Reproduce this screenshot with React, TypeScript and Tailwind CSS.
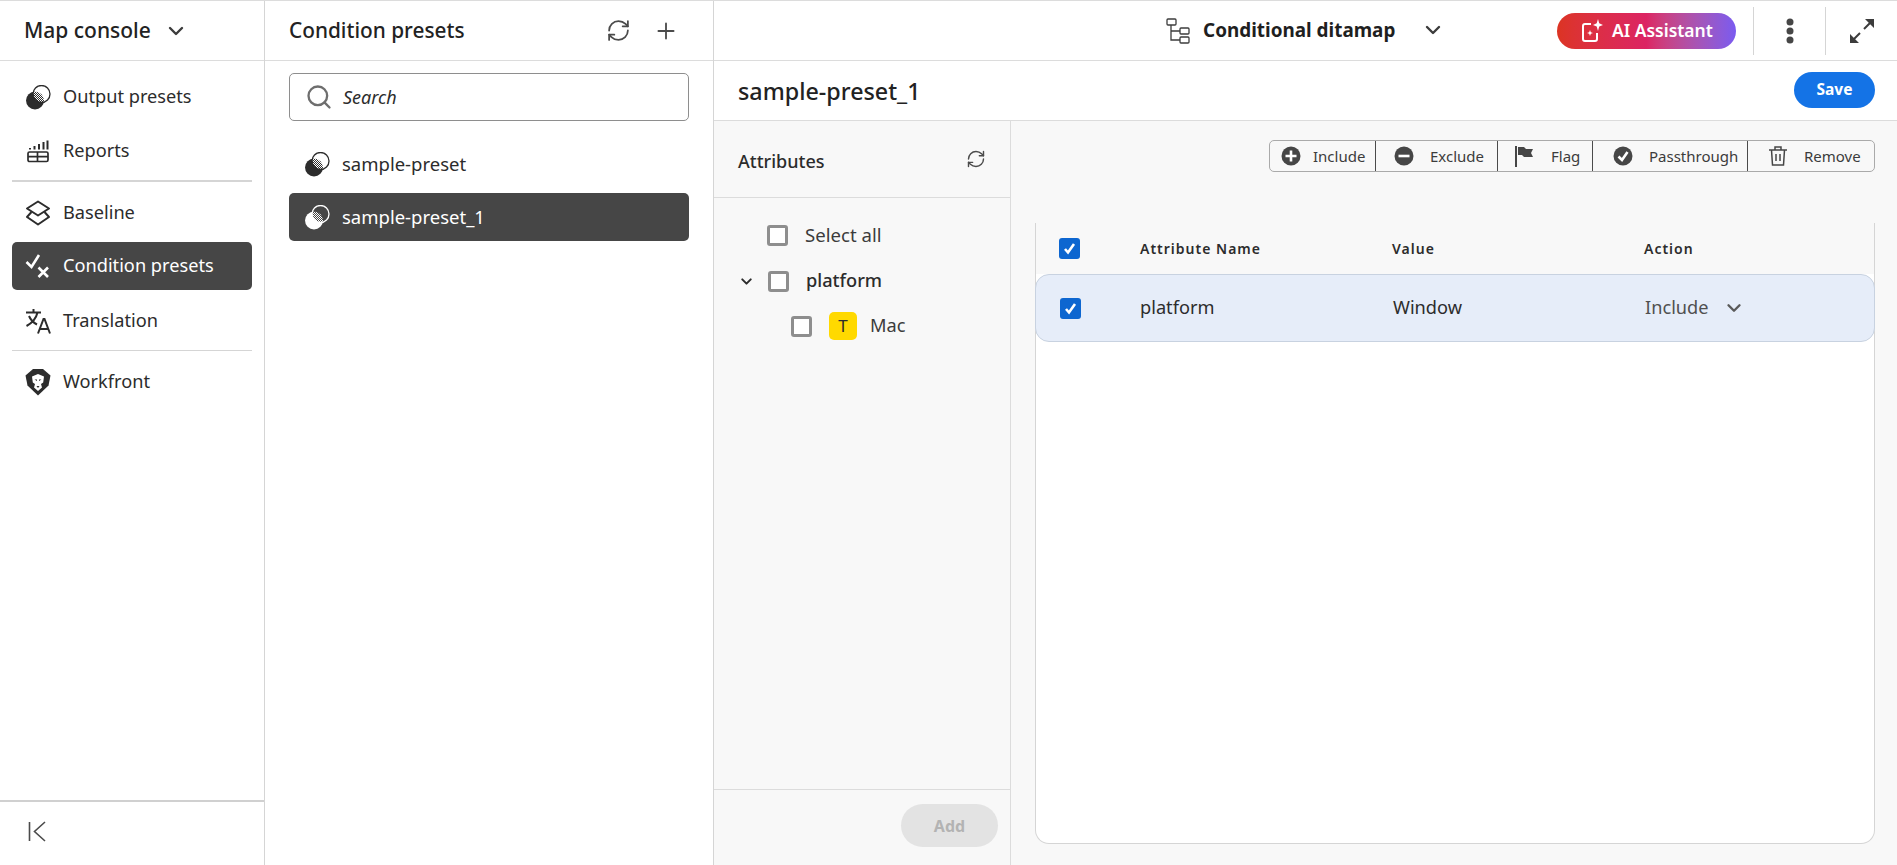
import React from 'react'
import { ChevronDown, RefreshCw, Plus, Search } from 'lucide-react'

const font = "font-['Noto_Sans',sans-serif]"

function PresetIcon({ inverted = false }: { inverted?: boolean }) {
  const c = inverted ? '#ffffff' : '#2c2c2c'
  const bg = inverted ? '#464646' : '#ffffff'
  const suffix = inverted ? 'W' : 'D'
  return (
    <svg width="25" height="25" viewBox="0 0 25 25" className="shrink-0">
      <defs>
        <pattern id={`dots${suffix}`} width="2" height="2" patternUnits="userSpaceOnUse">
          <rect width="1" height="1" fill={c} />
          <rect x="1" y="1" width="1" height="1" fill={c} />
        </pattern>
        <clipPath id={`lens${suffix}`}>
          <circle cx="9" cy="15.500" r="9" />
        </clipPath>
      </defs>
      <circle cx="9" cy="15.500" r="9" fill={c} />
      <circle cx="15.500" cy="9" r="8.500" fill={bg} />
      <circle cx="15.500" cy="9" r="8.500" fill={`url(#dots${suffix})`} clipPath={`url(#lens${suffix})`} />
      <circle cx="15.500" cy="9" r="8.500" fill="none" stroke={c} strokeWidth="1.300" />
    </svg>
  )
}

function ReportsIcon() {
  return (
    <svg width="24" height="24" viewBox="0 0 24 24" fill="none" stroke="#2c2c2c" strokeWidth="1.700">
      <rect x="2" y="13" width="20" height="9.500" rx="1.500" />
      <path d="M2 17.700h20M11.500 13v9.500" />
      <path d="M4 10.500V9M8.500 10.500V7M13 10.500V5M17.500 10.500V3M21.500 10.500V1.500" strokeWidth="2" />
    </svg>
  )
}

function BaselineIcon() {
  return (
    <svg width="26" height="26" viewBox="0 0 26 26" fill="none" stroke="#2c2c2c" strokeWidth="2" strokeLinejoin="round">
      <path d="M13 1.500 24 8.500 13 15.500 2 8.500Z" />
      <path d="M6.500 12 2 17l11 7.500L24 17l-4.500-5" />
    </svg>
  )
}

function ConditionIcon() {
  return (
    <svg width="26" height="26" viewBox="0 0 26 26" fill="none" stroke="#fff" strokeWidth="2.600">
      <path d="M1.500 9 6.500 14 14 2" />
      <path d="M13.500 14.500l9.500 9.500M23 14.500 13.500 24" />
    </svg>
  )
}

function TranslateIcon() {
  return (
    <svg width="26" height="26" viewBox="0 0 26 26" fill="none" stroke="#2c2c2c" strokeWidth="2">
      <path d="M1 4.500h15M8.500 1v3.500M12.500 4.500C11 11 7 15 1.500 18M4 8c1.500 3.500 4 6.500 8 8.500" />
      <path d="M13 25.500 18.500 11h1L25 25.500M15 21h8.500" />
    </svg>
  )
}

function WorkfrontIcon() {
  return (
    <svg width="26" height="28" viewBox="0 0 26 28">
      <path d="M8 1h10l7.500 6.500-2 10L13 27.500 2.500 17.500 .5 7.500Z" fill="#2c2c2c" />
      <path d="M7 8.500 13 6l6 2.500-.8 6-2.200 1.500 1 3.500L13 23l-4-3.500 1-3.500-2.200-1.500Z" fill="#fff" />
      <path d="M9.500 11.500h2.500v1.500zM16.500 11.500H14v1.500zM11.500 18h3L13 20z" fill="#2c2c2c" />
    </svg>
  )
}

function Checkbox({ checked = false }: { checked?: boolean }) {
  if (checked) {
    return (
      <span className="flex h-[21px] w-[21px] shrink-0 items-center justify-center rounded-[3px] bg-[#0d66d0]">
        <svg width="15" height="15" viewBox="0 0 15 15" fill="none" stroke="#fff" strokeWidth="2.600">
          <path d="M3 8l3 3.500L12 3" />
        </svg>
      </span>
    )
  }
  return <span className="block h-[21px] w-[21px] shrink-0 rounded-[3px] border-[3px] border-[#8e8e8e] bg-white" />
}

function NavItem({ icon, label, active = false }: { icon: React.ReactNode; label: string; active?: boolean }) {
  return (
    <div className={`mx-3 flex h-12 items-center gap-3 rounded-[5px] pl-[13px] text-[18.200px] ${active ? 'bg-[#464646] text-white' : 'text-[#2c2c2c]'}`}>
      <span className="flex w-[26px] justify-center">{icon}</span>
      {label}
    </div>
  )
}

function ToolButton({ icon, label, width, gap }: { icon: React.ReactNode; label: string; width: string; gap: string }) {
  return (
    <div className={`flex h-full items-center border-r border-[#4b4b4b] pl-[7px] text-[15px] text-[#3c3c3c] last:border-r-0 ${width} ${gap}`}>
      {icon}
      {label}
    </div>
  )
}

function CircleIcon({ kind }: { kind: 'plus' | 'minus' | 'check' }) {
  return (
    <svg width="20" height="20" viewBox="0 0 20 20" className="ml-1 shrink-0">
      <circle cx="10" cy="10" r="9.500" fill="#464646" />
      {kind === 'plus' && <path d="M10 4.500v11M4.500 10h11" stroke="#fff" strokeWidth="2.600" />}
      {kind === 'minus' && <path d="M4.500 10h11" stroke="#fff" strokeWidth="2.600" />}
      {kind === 'check' && <path d="M5.500 10.500 9 14l5.500-8" stroke="#fff" strokeWidth="2.600" fill="none" />}
    </svg>
  )
}

export default function App() {
  return (
    <div className={`${font} flex h-[865px] w-[1897px] overflow-hidden border-t border-[#dcdcdc] bg-white text-[#2c2c2c]`}>
      {/* Left nav */}
      <aside className="flex w-[265px] shrink-0 flex-col border-r border-[#d5d5d5]">
        <div className="flex h-[60px] shrink-0 items-center gap-[13px] border-b border-[#dcdcdc] pl-6 text-[21px] font-medium text-[#222]">
          Map console
          <ChevronDown size={24} strokeWidth={2.400} className="text-[#3c3c3c]" />
        </div>
        <div className="mt-3 flex flex-col">
          <NavItem icon={<PresetIcon />} label="Output presets" />
          <div className="mt-[6px]"><NavItem icon={<ReportsIcon />} label="Reports" /></div>
          <div className="mx-3 mt-[5px] mb-[7px] h-0.5 bg-[#d5d5d5]" />
          <NavItem icon={<BaselineIcon />} label="Baseline" />
          <div className="mt-[5px]"><NavItem icon={<ConditionIcon />} label="Condition presets" active /></div>
          <div className="mt-[7px]"><NavItem icon={<TranslateIcon />} label="Translation" /></div>
          <div className="mx-3 mt-[5px] mb-[7px] h-px bg-[#d5d5d5]" />
          <NavItem icon={<WorkfrontIcon />} label="Workfront" />
        </div>
        <div className="mt-auto flex h-[65px] shrink-0 items-center border-t-2 border-[#d0d0d0] pb-[4px] pl-[28px]">
          <svg width="19" height="21" viewBox="0 0 19 21" fill="none" stroke="#4b4b4b" strokeWidth="1.600">
            <path d="M1.500 1v19M17 1 6.500 10.500 17 20" />
          </svg>
        </div>
      </aside>

      {/* Preset list */}
      <section className="flex w-[449px] shrink-0 flex-col border-r border-[#d5d5d5]">
        <div className="flex h-[60px] shrink-0 items-center justify-between border-b border-[#dcdcdc] pl-6 pr-[34px] text-[20.800px] font-medium text-[#222]">
          Condition presets
          <div className="flex items-center gap-[22px] text-[#4b4b4b]">
            <RefreshCw size={25} strokeWidth={1.700} />
            <Plus size={26} strokeWidth={1.700} />
          </div>
        </div>
        <div className="mx-6 mt-3 flex h-12 items-center gap-[10px] rounded-[5px] border border-[#8e8e8e] pl-[15px] text-[18px] italic text-[#2c2c2c]">
          <Search size={28} strokeWidth={2} className="text-[#6e6e6e]" />
          Search
        </div>
        <div className="mt-[19px] flex flex-col">
          <div className="mx-6 flex h-12 items-center gap-3 pl-4 text-[18.500px]">
            <PresetIcon />
            sample-preset
          </div>
          <div className="mx-6 mt-[5px] flex h-12 items-center gap-3 rounded-[5px] bg-[#464646] pl-4 text-[18.500px] text-white">
            <PresetIcon inverted />
            sample-preset_1
          </div>
        </div>
      </section>

      {/* Editor */}
      <main className="flex min-w-0 flex-1 flex-col">
        <div className="flex h-[60px] shrink-0 items-center border-b border-[#dcdcdc]">
          <div className="ml-[452px] flex items-center">
            <svg width="27" height="27" viewBox="0 0 27 27" fill="none" stroke="#3c3c3c" strokeWidth="1.300">
              <rect x="1" y="2" width="9" height="6" rx="1" />
              <rect x="14" y="11" width="9" height="6" rx="1" />
              <rect x="14" y="20" width="9" height="6" rx="1" />
              <path d="M5 8v15h9M5 14h9" />
            </svg>
            <span className="ml-[10px] text-[18.900px] font-bold text-[#1f1f1f]">Conditional ditamap</span>
            <ChevronDown size={24} strokeWidth={2.400} className="ml-[26px] text-[#3c3c3c]" />
          </div>
          <div className="ml-[112px] flex h-[36px] w-[179px] items-center justify-center gap-2 rounded-full bg-gradient-to-r from-[#dc3422] via-[#dc2463] to-[#7a5af0] text-[17.500px] font-semibold text-white">
            <svg width="23" height="26" viewBox="0 0 23 26" fill="none" stroke="#fff" strokeWidth="2">
              <path d="M10 6H4a2 2 0 0 0-2 2v13a2 2 0 0 0 2 2h10a2 2 0 0 0 2-2v-6" />
              <path d="M17 1l1.200 4.300L22 7l-3.800 1.500L17 13l-1.300-4.500L12 7l3.700-1.700Z" fill="#fff" stroke="none" />
              <path d="M9 12l.8 2.200 2.200.8-2.200.8L9 18l-.8-2.200L6 15l2.200-.8Z" fill="#fff" stroke="none" />
            </svg>
            AI Assistant
          </div>
          <div className="ml-[17px] flex h-12 w-[73px] items-center justify-center border-x border-[#d5d5d5]">
            <svg width="10" height="26" viewBox="0 0 10 26" fill="#464646">
              <circle cx="5" cy="4" r="3.500" />
              <circle cx="5" cy="13" r="3.500" />
              <circle cx="5" cy="22" r="3.500" />
            </svg>
          </div>
          <div className="ml-[23px]">
            <svg width="26" height="26" viewBox="0 0 26 26" fill="none" stroke="#3c3c3c" strokeWidth="2">
              <path d="M15 11 23 3M3 23l8-8" />
              <path d="M16 1h9v9ZM1 16v9h9Z" fill="#3c3c3c" stroke="none" />
            </svg>
          </div>
        </div>

        <div className="flex h-[60px] shrink-0 items-center justify-between border-b border-[#dcdcdc] pl-6 pr-[22px]">
          <span className="pt-[2px] text-[23.300px] font-medium text-[#222]">sample-preset_1</span>
          <button className="mb-[2px] h-9 w-[81px] rounded-full bg-[#1473e6] text-[15.500px] font-bold text-white">Save</button>
        </div>

        <div className="flex min-h-0 flex-1 bg-[#f8f8f8]">
          {/* Attributes */}
          <div className="flex w-[297px] shrink-0 flex-col border-r border-[#dcdcdc]">
            <div className="flex h-[77px] shrink-0 items-center justify-between border-b border-[#dcdcdc] pl-6 pr-6 text-[18px] font-medium">
              <span className="pt-1">Attributes</span>
              <RefreshCw size={20} strokeWidth={1.700} className="text-[#4b4b4b]" />
            </div>
            <div className="flex flex-1 flex-col pt-[19px] text-[18.200px]">
              <div className="flex h-[36px] items-center gap-[17px] pl-[53px] text-[#3c3c3c]">
                <Checkbox />
                <span className="text-[18.600px]">Select all</span>
              </div>
              <div className="mt-[10px] flex h-[36px] items-center pl-[24px] font-medium">
                <ChevronDown size={17} strokeWidth={2.800} />
                <span className="ml-[13px]"><Checkbox /></span>
                <span className="ml-[17px]">platform</span>
              </div>
              <div className="mt-[9px] flex h-[36px] items-center pl-[77px] text-[#3c3c3c]">
                <Checkbox />
                <span className="ml-[17px] flex h-[28px] w-[28px] items-center justify-center rounded-[5px] bg-[#ffd900] text-[17px] font-normal text-[#2c2c2c]">T</span>
                <span className="ml-[13px]">Mac</span>
              </div>
            </div>
            <div className="flex h-[76px] shrink-0 items-center justify-end border-t border-[#dcdcdc] pb-[4px] pr-[12px]">
              <div className="flex h-[43px] w-[97px] items-center justify-center rounded-full bg-[#e3e3e3] text-[16px] font-bold text-[#b3b3b3]">Add</div>
            </div>
          </div>

          {/* Actions and table */}
          <div className="flex min-w-0 flex-1 flex-col pl-6 pr-[22px] pt-[19px] pb-[21px]">
            <div className="flex justify-end">
              <div className="flex h-[32px] items-center rounded-[5px] border border-[#aaaaaa]">
                <ToolButton width="w-[106px]" gap="gap-[12px]" icon={<CircleIcon kind="plus" />} label="Include" />
                <ToolButton width="w-[122px]" gap="gap-4" icon={<span className="ml-[7px]"><CircleIcon kind="minus" /></span>} label="Exclude" />
                <ToolButton width="w-[95px]" gap="gap-4" icon={
                  <svg width="22" height="24" viewBox="0 0 22 24" className="ml-2 shrink-0">
                    <path d="M2 2h2v21H2z" fill="#464646" />
                    <path d="M5 3h6l2 2h7l-2 4 2 4h-9l-2-2H5z" fill="#464646" />
                  </svg>
                } label="Flag" />
                <ToolButton width="w-[155px]" gap="gap-4" icon={<span className="ml-[9px]"><CircleIcon kind="check" /></span>} label="Passthrough" />
                <ToolButton width="w-[126px]" gap="gap-4" icon={
                  <svg width="20" height="22" viewBox="0 0 20 22" fill="none" stroke="#464646" strokeWidth="1.500" className="ml-[13px] shrink-0">
                    <path d="M1 5h18M7 5V2h6v3M3.500 5l1 15h11l1-15M8 9v7M12 9v7" />
                  </svg>
                } label="Remove" />
              </div>
            </div>

            <div className="mt-[51px] flex min-h-0 flex-1 flex-col rounded-b-[14px] border-x border-b border-[#d5d5d5] bg-white">
              <div className="flex h-[51px] shrink-0 items-center bg-[#f8f8f8] pl-[23px] text-[14px] font-semibold tracking-[1px] text-[#2c2c2c]">
                <span className="w-[79px]"><Checkbox checked /></span>
                <span className="w-[254px] pl-[2px]">Attribute Name</span>
                <span className="w-[252px]">Value</span>
                <span>Action</span>
              </div>
              <div className="-mx-px flex h-[68px] shrink-0 items-center rounded-[14px] border border-[#c8d2e0] bg-[#e6edf9] pl-[24px] text-[18.200px]">
                <span className="w-[78px]"><Checkbox checked /></span>
                <span className="w-[255px] pl-[2px]">platform</span>
                <span className="w-[252px]">Window</span>
                <span className="flex items-center gap-[14px] text-[#505050]">
                  Include
                  <ChevronDown size={22} strokeWidth={2.600} className="text-[#5a5a5a]" />
                </span>
              </div>
            </div>
          </div>
        </div>
      </main>
    </div>
  )
}
